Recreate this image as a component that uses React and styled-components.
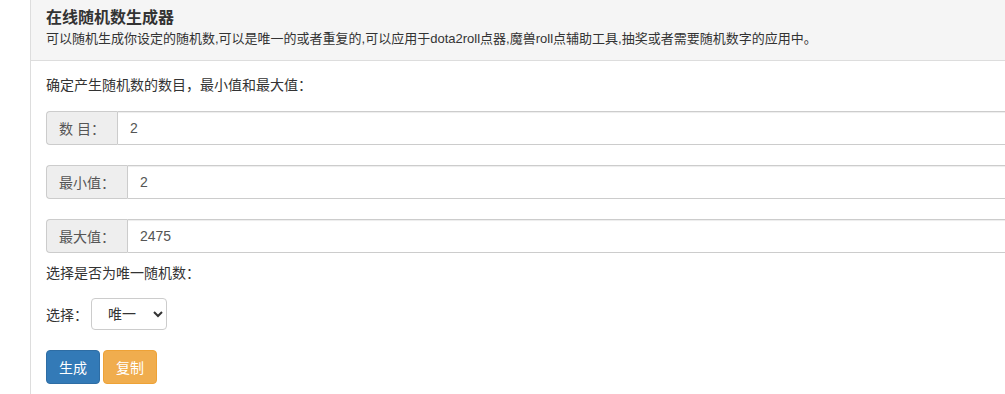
import React from "react";
import styled, { createGlobalStyle } from "styled-components";

const GlobalStyle = createGlobalStyle`
  html, body {
    margin: 0;
    padding: 0;
    background: #fff;
    overflow: hidden;
  }
  body {
    font-family: "Liberation Sans", "Noto Sans CJK SC", sans-serif;
    font-size: 14px;
    color: #333;
  }
`;

const fields = [
  { label: "数 目：", value: "2" },
  { label: "最小值：", value: "2" },
  { label: "最大值：", value: "2475" },
];

const App = () => {
  return (
    <>
      <GlobalStyle />
      <Page>
        <Panel>
          <Heading>
            <Title>在线随机数生成器</Title>
            <Desc>
              可以随机生成你设定的随机数,可以是唯一的或者重复的,可以应用于dota2roll点器,魔兽roll点辅助工具,抽奖或者需要随机数字的应用中。
            </Desc>
          </Heading>
          <Body>
            <Para gap={16}>确定产生随机数的数目，最小值和最大值：</Para>
            {fields.map((f, i) => (
              <InputGroup key={f.label} last={i === fields.length - 1}>
                <Addon>{f.label}</Addon>
                <Field type="text" defaultValue={f.value} />
              </InputGroup>
            ))}
            <Para gap={15}>选择是否为唯一随机数：</Para>
            <SelectRow>
              <span>选择：</span>
              <Select defaultValue="1">
                <option value="1">唯一</option>
                <option value="0">重复</option>
              </Select>
            </SelectRow>
            <Buttons>
              <Btn color="#337ab7" border="#2e6da4">生成</Btn>
              <Btn color="#f0ad4e" border="#eea236">复制</Btn>
            </Buttons>
          </Body>
        </Panel>
      </Page>
    </>
  );
};

const Page = styled.div`
  width: 1005px;
  height: 394px;
  overflow: hidden;
  padding-left: 30px;
  box-sizing: border-box;
`;

const Panel = styled.div`
  width: 1100px;
  border-left: 1px solid #ddd;
  background: #fff;
`;

const Heading = styled.div`
  background: #f5f5f5;
  border-bottom: 1px solid #ddd;
  padding: 7px 15px 10px;
  height: 61px;
  box-sizing: border-box;
`;

const Title = styled.h3`
  margin: 0;
  font-size: 16px;
  font-weight: bold;
  line-height: 22px;
  color: #333;
`;

const Desc = styled.div`
  font-size: 13px;
  line-height: 20px;
  color: #333;
`;

const Body = styled.div`
  padding: 14px 15px 15px;
`;

const Para = styled.p`
  margin: 0 0 ${(p) => p.gap}px;
  line-height: 20px;
`;

const InputGroup = styled.div`
  display: flex;
  height: 34px;
  margin-bottom: ${(p) => (p.last ? "10px" : "20px")};
`;

const Addon = styled.span`
  display: flex;
  align-items: center;
  padding: 0 12px;
  background: #eee;
  border: 1px solid #ccc;
  border-right: 0;
  border-radius: 4px 0 0 4px;
  color: #555;
  white-space: nowrap;
`;

const Field = styled.input`
  flex: 1;
  height: 34px;
  box-sizing: border-box;
  padding: 6px 12px;
  border: 1px solid #ccc;
  border-radius: 0 4px 4px 0;
  font-family: "Liberation Sans", "Noto Sans CJK SC", sans-serif;
  font-size: 14px;
  color: #555;
  box-shadow: inset 0 1px 1px rgba(0, 0, 0, 0.075);
  outline: none;
`;

const SelectRow = styled.div`
  display: flex;
  align-items: center;
  gap: 3px;
  margin-bottom: 20px;
`;

const Select = styled.select`
  width: 76px;
  height: 32px;
  padding: 0 8px 0 12px;
  border: 1px solid #ccc;
  border-radius: 4px;
  background: #fff;
  font-family: "Liberation Sans", "Noto Sans CJK SC", sans-serif;
  font-size: 14px;
  color: #333;
`;

const Buttons = styled.div`
  display: flex;
  gap: 3px;
`;

const Btn = styled.button`
  height: 34px;
  padding: 0 12px;
  background: ${(p) => p.color};
  border: 1px solid ${(p) => p.border};
  border-radius: 4px;
  color: #fff;
  font-family: "Liberation Sans", "Noto Sans CJK SC", sans-serif;
  font-size: 14px;
  cursor: pointer;
`;

export default App;
